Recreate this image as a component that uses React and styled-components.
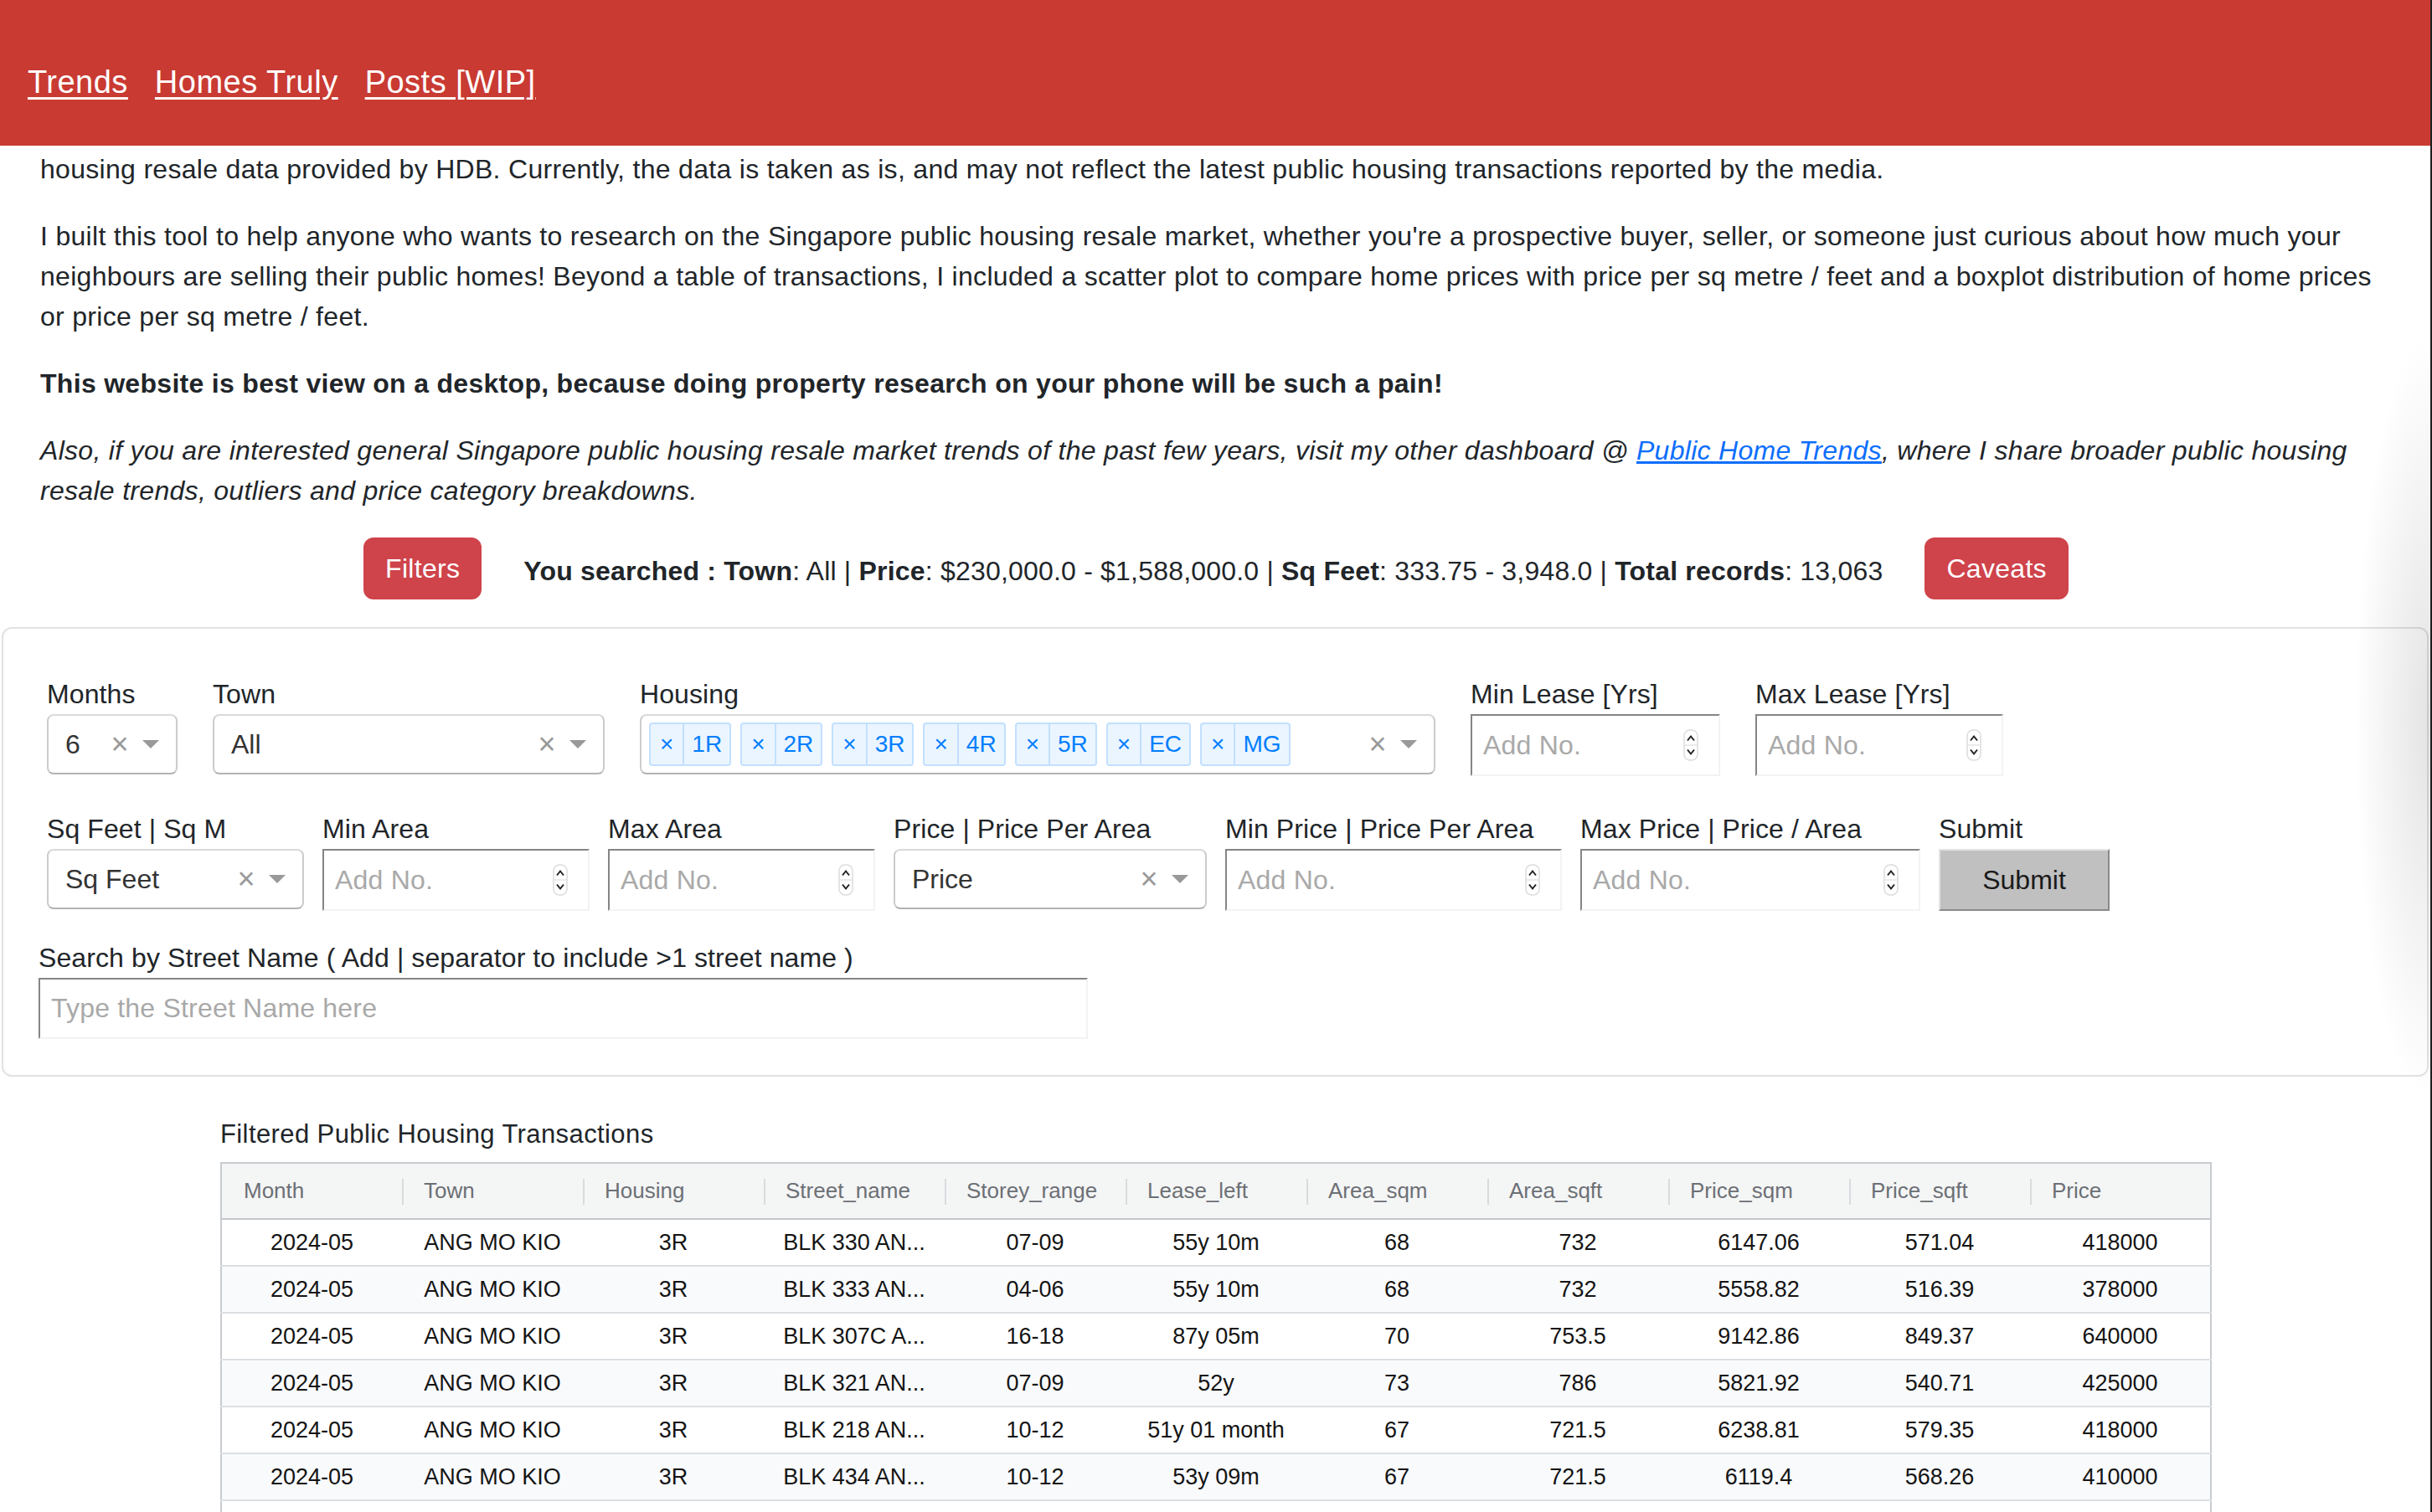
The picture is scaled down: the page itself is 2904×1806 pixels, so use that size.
import React from 'react';
import styled, { createGlobalStyle } from 'styled-components';

const GlobalStyle = createGlobalStyle`
  html, body {
    margin: 0;
    padding: 0;
    background: #fff;
    overflow: hidden;
  }
  body {
    font-family: "Liberation Sans", Arial, sans-serif;
    color: #212529;
  }
  * { box-sizing: border-box; }
`;

const Page = styled.div`
  position: relative;
  height: 1806px;
  overflow: hidden;
  background: #fff;

  // window frame on the right edge
  &::after {
    content: '';
    position: absolute;
    top: 0;
    right: 0;
    width: 2px;
    height: 100%;
    background: #1e1e1e;
  }
`;

const EdgeShade = styled.div`
  position: absolute;
  top: 0;
  right: 2px;
  width: 110px;
  height: 100%;
  pointer-events: none;
  background: radial-gradient(ellipse 90px 460px at 100% 860px, rgba(0, 0, 0, 0.11), rgba(0, 0, 0, 0) 100%);
`;

const Header = styled.header`
  height: 174px;
  background: #c93a32;
  display: flex;
  align-items: center;
  gap: 32px;
  padding: 22px 0 0 33px;
`;

const NavLink = styled.a`
  color: #fff;
  font-size: 38px;
  letter-spacing: 0.5px;
  text-decoration: underline;
  text-decoration-thickness: 3px;
  text-underline-offset: 5px;
  cursor: pointer;
`;

const Intro = styled.section`
  padding: 4px 48px 0 48px;
`;

const Para = styled.p`
  margin: 0 0 32px;
  font-size: 32px;
  line-height: 48px;
  letter-spacing: 0.3px;
  font-weight: ${p => (p.$bold ? 700 : 400)};
  font-style: ${p => (p.$italic ? 'italic' : 'normal')};
`;

const TextLink = styled.a`
  color: #0d6efd;
  text-decoration: underline;
`;

const SearchRow = styled.div`
  display: flex;
  justify-content: center;
  align-items: center;
  gap: 50px;
  margin-bottom: 33px;
`;

const RedButton = styled.button`
  height: 74px;
  padding: 0 26px;
  border: none;
  border-radius: 12px;
  background: #cf434b;
  color: #fff;
  font-family: inherit;
  font-size: 32px;
  letter-spacing: 0.3px;
`;

const Summary = styled.div`
  padding-top: 6px;
  font-size: 32px;
  line-height: 48px;
  letter-spacing: 0.2px;
  color: #212529;
`;

const FilterCard = styled.section`
  margin: 0 4px 0 2px;
  border: 2px solid #e2e2e2;
  border-radius: 12px;
  padding: 54px 0 43px 0;
`;

const FieldRow = styled.div`
  display: flex;
  align-items: flex-start;
  gap: ${p => p.$gap}px;
  padding-left: 52px;
  margin-bottom: ${p => p.$mb}px;
`;

const Field = styled.div`
  width: ${p => p.$w}px;
  display: flex;
  flex-direction: column;
`;

const Label = styled.label`
  font-size: 32px;
  line-height: 48px;
  letter-spacing: 0.1px;
  color: #212529;
  white-space: nowrap;
`;

const SelectControl = styled.div`
  height: 72px;
  border: 2px solid #ccc;
  border-color: #d9d9d9 #ccc #b3b3b3;
  border-radius: 8px;
  background: #fff;
  display: flex;
  align-items: center;
`;

const SelectValue = styled.div`
  flex: 1;
  padding-left: 20px;
  font-size: 32px;
  color: #333;
  white-space: nowrap;
  overflow: hidden;
`;

const MultiValues = styled.div`
  flex: 1;
  display: flex;
  align-items: center;
  gap: 11px;
  padding-left: 9px;
`;

const Chip = styled.div`
  height: 52px;
  display: flex;
  align-items: stretch;
  background: #ebf5ff;
  border: 2px solid #c2e0ff;
  border-radius: 4px;
  color: #007eff;
  font-size: 28px;
`;

const ChipIcon = styled.span`
  display: flex;
  align-items: center;
  padding: 0 11px;
  border-right: 2px solid #c2e0ff;
`;

const ChipLabel = styled.span`
  display: flex;
  align-items: center;
  padding: 0 9px;
`;

const ClearZone = styled.span`
  width: 34px;
  text-align: center;
  color: #999;
  font-size: 36px;
  line-height: 1;
`;

const ArrowZone = styled.span`
  width: 50px;
  padding-right: 10px;
  display: flex;
  justify-content: center;
`;

const Arrow = styled.span`
  width: 0;
  height: 0;
  margin-top: 5px;
  border-style: solid;
  border-width: 10px 10px 5px;
  border-color: #999 transparent transparent;
`;

const InsetBox = styled.div`
  height: ${p => p.$h || 74}px;
  border-style: solid;
  border-width: 2px;
  border-color: #858585 #f3f3f3 #f3f3f3 #858585;
  background: #fff;
  display: flex;
  align-items: center;
  padding: 0 24px 0 13px;
`;

const BareInput = styled.input`
  flex: 1;
  min-width: 0;
  border: none;
  outline: none;
  padding: 0;
  background: transparent;
  font-family: inherit;
  font-size: 32px;
  letter-spacing: 0.2px;
  color: #212529;

  &::placeholder {
    color: #a9a9a9;
  }
`;

const SubmitButton = styled.button`
  height: 74px;
  width: 100%;
  background: #c0c0c0;
  border-style: solid;
  border-width: 2px;
  border-color: #e3e3e3 #8a8a8a #8a8a8a #e3e3e3;
  font-family: inherit;
  font-size: 32px;
  color: #1a1a1a;
`;

const StreetBlock = styled.div`
  padding-left: 42px;
  width: ${42 + 1253}px;
  display: flex;
  flex-direction: column;
`;

const TableSection = styled.section`
  width: 2378px;
  margin: 51px auto 0;
`;

const TableTitle = styled.div`
  font-size: 31px;
  line-height: 36px;
  letter-spacing: 0.4px;
  margin-bottom: 15px;
  color: #212529;
`;

const Table = styled.table`
  width: 100%;
  table-layout: fixed;
  border-collapse: collapse;
  border: 2px solid #c8cbcf;
  border-bottom: none;
`;

const HeadCell = styled.th`
  position: relative;
  height: 67px;
  padding: 0 0 0 26px;
  background: #f4f5f5;
  border-bottom: 2px solid #c4c7cb;
  color: #6c7075;
  font-size: 26px;
  font-weight: 400;
  text-align: left;

  &:not(:first-child)::before {
    content: '';
    position: absolute;
    left: 0;
    top: 18px;
    width: 2px;
    height: 31px;
    background: #d9dbde;
  }
`;

const Row = styled.tr`
  background: ${p => (p.$alt ? '#f9fafc' : '#fff')};
`;

const Cell = styled.td`
  height: 56px;
  padding: 0 12px;
  border-bottom: 2px solid #dcdfe2;
  text-align: center;
  font-size: 27px;
  color: #141414;
  white-space: nowrap;
  overflow: hidden;
`;

const Spinner = () => (
  <svg width="18" height="38" viewBox="0 0 18 38">
    <rect x="1" y="1" width="16" height="36" rx="7" fill="#fff" stroke="#dcdcdc" strokeWidth="1.5" />
    <line x1="2" y1="19" x2="16" y2="19" stroke="#e4e4e4" strokeWidth="1.5" />
    <path d="M5 13.5 L9 8.5 L13 13.5" fill="none" stroke="#222" strokeWidth="2" />
    <path d="M5 24.5 L9 29.5 L13 24.5" fill="none" stroke="#222" strokeWidth="2" />
  </svg>
);

const Select = ({ value }) => (
  <SelectControl>
    <SelectValue>{value}</SelectValue>
    <ClearZone>×</ClearZone>
    <ArrowZone><Arrow /></ArrowZone>
  </SelectControl>
);

const NumberField = ({ label, w }) => (
  <Field $w={w}>
    <Label>{label}</Label>
    <InsetBox>
      <BareInput placeholder="Add No." />
      <Spinner />
    </InsetBox>
  </Field>
);

const housing = ['1R', '2R', '3R', '4R', '5R', 'EC', 'MG'];

const columns = ['Month', 'Town', 'Housing', 'Street_name', 'Storey_range', 'Lease_left', 'Area_sqm', 'Area_sqft', 'Price_sqm', 'Price_sqft', 'Price'];

const rows = [
  ['2024-05', 'ANG MO KIO', '3R', 'BLK 330 AN...', '07-09', '55y 10m', '68', '732', '6147.06', '571.04', '418000'],
  ['2024-05', 'ANG MO KIO', '3R', 'BLK 333 AN...', '04-06', '55y 10m', '68', '732', '5558.82', '516.39', '378000'],
  ['2024-05', 'ANG MO KIO', '3R', 'BLK 307C A...', '16-18', '87y 05m', '70', '753.5', '9142.86', '849.37', '640000'],
  ['2024-05', 'ANG MO KIO', '3R', 'BLK 321 AN...', '07-09', '52y', '73', '786', '5821.92', '540.71', '425000'],
  ['2024-05', 'ANG MO KIO', '3R', 'BLK 218 AN...', '10-12', '51y 01 month', '67', '721.5', '6238.81', '579.35', '418000'],
  ['2024-05', 'ANG MO KIO', '3R', 'BLK 434 AN...', '10-12', '53y 09m', '67', '721.5', '6119.4', '568.26', '410000'],
  ['2024-05', 'ANG MO KIO', '3R', 'BLK 232 AN...', '01-03', '53y 02m', '67', '721.5', '5820.9', '540.76', '390000'],
];

export default function App() {
  return (
    <Page>
      <GlobalStyle />
      <Header>
        <NavLink>Trends</NavLink>
        <NavLink>Homes Truly</NavLink>
        <NavLink>Posts [WIP]</NavLink>
      </Header>

      <Intro>
        <Para>
          housing resale data provided by HDB. Currently, the data is taken as is, and may not reflect the latest public housing transactions reported by the media.
        </Para>
        <Para>
          I built this tool to help anyone who wants to research on the Singapore public housing resale market, whether you're a prospective buyer, seller, or someone just curious about how much your neighbours are selling their public homes! Beyond a table of transactions, I included a scatter plot to compare home prices with price per sq metre / feet and a boxplot distribution of home prices or price per sq metre / feet.
        </Para>
        <Para $bold>
          This website is best view on a desktop, because doing property research on your phone will be such a pain!
        </Para>
        <Para $italic>
          Also, if you are interested general Singapore public housing resale market trends of the past few years, visit my other dashboard @ <TextLink>Public Home Trends</TextLink>, where I share broader public housing resale trends, outliers and price category breakdowns.
        </Para>
      </Intro>

      <SearchRow>
        <RedButton>Filters</RedButton>
        <Summary>
          <b>You searched : Town</b>: All | <b>Price</b>: $230,000.0 - $1,588,000.0 | <b>Sq Feet</b>: 333.75 - 3,948.0 | <b>Total records</b>: 13,063
        </Summary>
        <RedButton>Caveats</RedButton>
      </SearchRow>

      <FilterCard>
        <FieldRow $gap={42} $mb={39}>
          <Field $w={156}>
            <Label>Months</Label>
            <Select value="6" />
          </Field>
          <Field $w={468}>
            <Label>Town</Label>
            <Select value="All" />
          </Field>
          <Field $w={950}>
            <Label>Housing</Label>
            <SelectControl>
              <MultiValues>
                {housing.map(h => (
                  <Chip key={h}>
                    <ChipIcon>×</ChipIcon>
                    <ChipLabel>{h}</ChipLabel>
                  </Chip>
                ))}
              </MultiValues>
              <ClearZone>×</ClearZone>
              <ArrowZone><Arrow /></ArrowZone>
            </SelectControl>
          </Field>
          <NumberField label="Min Lease [Yrs]" w={298} />
          <NumberField label="Max Lease [Yrs]" w={296} />
        </FieldRow>

        <FieldRow $gap={22} $mb={32}>
          <Field $w={307}>
            <Label>Sq Feet | Sq M</Label>
            <Select value="Sq Feet" />
          </Field>
          <NumberField label="Min Area" w={319} />
          <NumberField label="Max Area" w={319} />
          <Field $w={374}>
            <Label>Price | Price Per Area</Label>
            <Select value="Price" />
          </Field>
          <NumberField label="Min Price | Price Per Area" w={402} />
          <NumberField label="Max Price | Price / Area" w={406} />
          <Field $w={204}>
            <Label>Submit</Label>
            <SubmitButton>Submit</SubmitButton>
          </Field>
        </FieldRow>

        <StreetBlock>
          <Label>Search by Street Name ( Add | separator to include &gt;1 street name )</Label>
          <InsetBox $h={73}>
            <BareInput placeholder="Type the Street Name here" />
          </InsetBox>
        </StreetBlock>
      </FilterCard>

      <TableSection>
        <TableTitle>Filtered Public Housing Transactions</TableTitle>
        <Table>
          <thead>
            <tr>
              {columns.map(c => (
                <HeadCell key={c}>{c}</HeadCell>
              ))}
            </tr>
          </thead>
          <tbody>
            {rows.map((r, i) => (
              <Row key={i} $alt={i % 2 === 1}>
                {r.map((v, j) => (
                  <Cell key={j}>{v}</Cell>
                ))}
              </Row>
            ))}
          </tbody>
        </Table>
      </TableSection>

      <EdgeShade />
    </Page>
  );
}
